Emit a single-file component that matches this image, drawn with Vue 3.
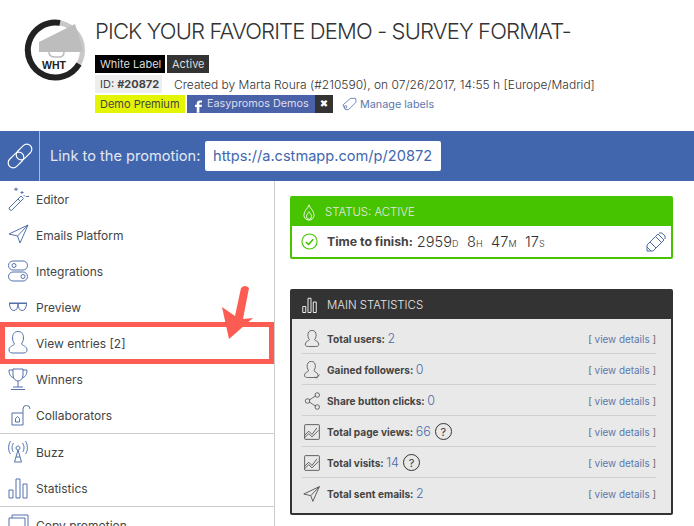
<script setup>
const nav = [
  [
    { label: 'Editor', d: 'M1 21 L13 9 L15.500 11.500 L3.500 23.500 Q1.500 23.500 1 21 Z M10 12 L12.500 14.500 M8 4 V0.500 M6 2.200 H10 M14 4 V7 M12.500 5.500 H15.500 M18 9.500 h3 M15.500 8 l1.500 1.500' },
    { label: 'Emails Platform', d: 'M1 11 L20 2 L12 20 L9.500 13 Z M9.500 13 L20 2' },
    { label: 'Integrations', d: 'M5 2 H15 A4.500 4.500 0 0 1 15 11 H5 A4.500 4.500 0 0 1 5 2 Z M5 13 H15 A4.500 4.500 0 0 1 15 22 H5 A4.500 4.500 0 0 1 5 13 Z M8 6.500 A2 2 0 1 1 4 6.500 A2 2 0 1 1 8 6.500 Z M17 17.500 A2 2 0 1 1 13 17.500 A2 2 0 1 1 17 17.500 Z' },
    { label: 'Preview', d: 'M1 8 H19 M1 8.500 H19 M1.500 9 Q2 15.500 6 15.500 Q9.500 15.500 10 9 M10 9 Q10.500 15.500 14 15.500 Q18 15.500 18.500 9' },
    { label: 'View entries [2]', d: 'M10 0.500 C6 0.500 4.500 3.500 4.500 7 C4.500 10 6 12 6.500 13 C6 14.500 1 15 1 19 C1 21.500 3 22 5 22 H15 C17 22 19 21.500 19 19 C19 15 14 14.500 13.500 13 C14 12 15.500 10 15.500 7 C15.500 3.500 14 0.500 10 0.500 Z' },
    { label: 'Winners', d: 'M5 2 H15 V8 C15 12 12 14 10 14 C8 14 5 12 5 8 Z M5 3 H1 C1 8 3 10 6 11 M15 3 H19 C19 8 17 10 14 11 M10 14 V20 M5 20 H15 M3 22.500 H17' },
    { label: 'Collaborators', d: 'M4 10 H15 V22 H4 Z M15 10 V6 A3.500 3.500 0 0 1 22 6 M9.500 13.500 L11.500 15.500 V19 H7.500 V15.500 Z' },
  ],
  [
    { label: 'Buzz', d: 'M12 8 A2 2 0 1 1 12 7.990 Z M10 10 L6.500 22 H13.500 L10 10 M8 17 H12 M5.500 3 C3.500 6 3.500 10 5.500 12 M14.500 3 C16.500 6 16.500 10 14.500 12 M2.500 1 C0 5 0 11 2.500 14 M17.500 1 C20 5 20 11 17.500 14' },
    { label: 'Statistics', d: 'M1 14 H5 V22 H1 Z M8 3 H12 V22 H8 Z M15 8 H19 V22 H15 Z' },
  ],
  [
    { label: 'Copy promotion', d: 'M1 5 H17 V22 H1 Z M4 5 V2 H20 V18 H17' },
  ],
]

const iconUser = nav[0][4].d
const iconChart = 'M3 2 H19 Q20 2 20 3 V19 Q20 20 19 20 H3 Q2 20 2 19 V3 Q2 2 3 2 Z M2 15 L7 10 L11 14 L17 6 M2 18 L7 13 L11 17 L19 9'
const iconSend = nav[0][1].d

const stats = [
  { label: 'Total users:', value: '2', d: iconUser, box: '0 0 20 24' },
  { label: 'Gained followers:', value: '0', d: iconUser + ' M15 21 L17 23 L21 18', box: '0 0 22 24' },
  { label: 'Share button clicks:', value: '0', d: 'M7 11 L16 5 M7 13 L16 19 M8 12 A3 3 0 1 1 2 12 A3 3 0 1 1 8 12 Z M21 4 A3 3 0 1 1 15 4 A3 3 0 1 1 21 4 Z M21 20 A3 3 0 1 1 15 20 A3 3 0 1 1 21 20 Z', box: '0 0 22 24' },
  { label: 'Total page views:', value: '66', d: iconChart, box: '0 0 22 22', help: true },
  { label: 'Total visits:', value: '14', d: iconChart, box: '0 0 22 22', help: true },
  { label: 'Total sent emails:', value: '2', d: iconSend, box: '0 0 22 22' },
]

const countdown = [
  ['2959', 'D'],
  ['8', 'H'],
  ['47', 'M'],
  ['17', 'S'],
]
</script>

<template>
  <div class="page">
    <header class="head">
      <svg class="logo" viewBox="0 0 62 62" width="62" height="62">
        <circle cx="31" cy="31" r="27.500" fill="none" stroke="#c8c8c8" stroke-width="5" />
        <path d="M36 3.900 A27.500 27.500 0 1 0 55 45" fill="none" stroke="#222" stroke-width="6" />
        <path d="M15 23 L51 5 L59 31 L56 33 L15 33 Z" fill="#bdbdbd" />
        <path d="M25 33 Q25 38 31 38 H35 Q40 38 40 33" fill="none" stroke="#bdbdbd" stroke-width="1.500" />
        <text x="30" y="50" text-anchor="middle" class="logo-text">WHT</text>
      </svg>
      <div class="head-body">
        <h1>PICK YOUR FAVORITE DEMO - SURVEY FORMAT-</h1>
        <div class="tags">
          <span class="tag black">White Label</span>
          <span class="tag dark">Active</span>
        </div>
        <div class="tags meta">
          <span class="tag grey">ID: <b>#20872</b></span>
          <span class="created">Created by Marta Roura (#210590), on 07/26/2017, 14:55 h [Europe/Madrid]</span>
        </div>
        <div class="tags">
          <span class="tag yellow">Demo Premium</span>
          <span class="tag fb">
            <svg class="f" viewBox="0 0 8 14" width="7" height="13" fill="#fff">
              <path d="M5 14 V7.500 H7.500 L8 5 H5 V3.500 Q5 2.500 6 2.500 H8 V0 H5.500 Q2 0 2 3.500 V5 H0 V7.500 H2 V14 Z" />
            </svg>
            Easypromos Demos
          </span>
          <span class="tag close">✖</span>
          <a class="manage">
            <svg viewBox="0 0 16 14" width="15" height="14" fill="none" stroke="#5a78ae" stroke-width="0.900">
              <path d="M1 8 L9 1 H14.500 L15 5 L7 13 H3.500 Z" />
              <circle cx="3.800" cy="10" r="1.300" />
            </svg>
            Manage labels
          </a>
        </div>
      </div>
    </header>

    <div class="linkbar">
      <div class="link-icon">
        <svg viewBox="0 0 26 26" width="26" height="26" fill="none" stroke="#fff" stroke-width="1.200">
          <rect x="8" y="4" width="18" height="10" rx="5" transform="rotate(-45 17 9)" />
          <rect x="0" y="12" width="18" height="10" rx="5" transform="rotate(-45 9 17)" />
        </svg>
      </div>
      <span class="link-label">Link to the promotion:</span>
      <span class="link-url">https://a.cstmapp.com/p/20872</span>
    </div>

    <div class="main">
      <nav class="side">
        <div v-for="(group, g) in nav" :key="g" class="group">
          <div v-for="item in group" :key="item.label" class="item">
            <span class="item-icon">
              <svg viewBox="0 0 24 24" width="24" height="24" fill="none" stroke="#4a6aa8" stroke-width="0.950">
                <path :d="item.d" />
              </svg>
            </span>
            {{ item.label }}
          </div>
        </div>
        <div class="highlight"></div>
        <svg class="arrow" viewBox="0 0 34 56" width="34" height="56">
          <path d="M21 3 Q25 -1 29 3 L23 34 L33 33 L9 54 L2 22 L15 31 Z" fill="#fd5c52" />
        </svg>
      </nav>

      <section class="content">
        <div class="card status">
          <div class="card-head">
            <svg viewBox="0 0 16 20" width="14" height="17" fill="none" stroke="#fff" stroke-width="1">
              <path d="M8 1 C9 5 14 8 14 13 A6 6 0 0 1 2 13 C2 8 7 5 8 1 Z M8 9 C9 11 11 12 11 15 A3 3 0 0 1 5 15 C5 12 7 11 8 9 Z" />
            </svg>
            STATUS: ACTIVE
          </div>
          <div class="status-body">
            <svg viewBox="0 0 18 18" width="17" height="17" fill="none" stroke="#46c400" stroke-width="1.200">
              <circle cx="9" cy="9" r="8" />
              <path d="M5 9.500 L8 12 L13 6.500" stroke-width="1.600" />
            </svg>
            <b class="finish">Time to finish:</b>
            <span class="count">
              <span v-for="c in countdown" :key="c[1]" class="count-part">{{ c[0] }}<small>{{ c[1] }}</small></span>
            </span>
            <svg class="pencil" viewBox="0 0 20 20" width="20" height="20" fill="none" stroke="#4a6aa8" stroke-width="1">
              <path d="M1 13 L12 2 L18 8 L7 19 H1 Z M9.500 4.500 L15.500 10.500 M4 10 L10 16 M1 15 L5 19 M13 1 L16 1 L19 4 L19 7" />
            </svg>
          </div>
        </div>

        <div class="card stats">
          <div class="card-head">
            <svg viewBox="0 0 20 24" width="15" height="18" fill="none" stroke="#fff" stroke-width="1.200">
              <path :d="nav[1][1].d" />
            </svg>
            MAIN STATISTICS
          </div>
          <div class="stats-body">
            <div v-for="s in stats" :key="s.label" class="stat">
              <span class="stat-icon">
                <svg :viewBox="s.box" width="18" height="18" fill="none" stroke="#444" stroke-width="1">
                  <path :d="s.d" />
                </svg>
              </span>
              <b>{{ s.label }}</b>
              <span class="val">{{ s.value }}</span>
              <span v-if="s.help" class="help">?</span>
              <span class="details">[ <a>view details</a> ]</span>
            </div>
          </div>
        </div>
      </section>
    </div>
  </div>
</template>

<style>
html, body { margin: 0; background: #fff; overflow: hidden; }
</style>

<style scoped>
.page {
  width: 694px;
  height: 526px;
  overflow: hidden;
  font-family: Inter, "Liberation Sans", sans-serif;
  color: #444;
}
.head {
  height: 131px;
  box-sizing: border-box;
  padding: 16px 0 0 24px;
  display: flex;
  align-items: flex-start;
}
.logo { flex: none; margin-top: 3px; }
.logo-text { font: bold 10.500px "Liberation Sans", sans-serif; fill: #222; }
.head-body { margin-left: 9px; }
h1 {
  margin: 0 0 9px;
  font-size: 22px;
  font-weight: 300;
  letter-spacing: -0.85px;
  line-height: 30px;
  color: #333;
  white-space: nowrap;
}
.tags { display: flex; align-items: center; gap: 2px; height: 18px; margin-bottom: 2px; }
.tag {
  height: 18px;
  line-height: 18px;
  padding: 0 5px;
  font-size: 11px;
  white-space: nowrap;
  box-sizing: border-box;
}
.black { background: #000; color: #ddd; width: 70px; }
.dark { background: #333; color: #ddd; width: 42px; }
.grey { background: #eee; color: #444; width: 67px; }
.created { font-size: 12px; font-weight: 300; margin-left: 10px; color: #333; white-space: nowrap; }
.yellow { background: #e4f500; color: #444; width: 90px; }
.fb { background: #4a62a8; color: #dde; display: flex; width: 128px; font-size: 10.800px; }
.f { flex: none; margin: 5px 5px 0 3px; }
.close {
  background: #333;
  color: #fff;
  margin-left: -2px;
  width: 18px;
  padding: 0;
  text-align: center;
  font-family: "DejaVu Sans", sans-serif;
  font-size: 10px;
}
.manage {
  margin-left: 7px;
  display: flex;
  align-items: center;
  gap: 3px;
  font-size: 10.800px;
  color: #5a78ae;
  white-space: nowrap;
}
.linkbar {
  height: 50px;
  background: #4166ae;
  display: flex;
  align-items: center;
  color: #e4e9f3;
}
.link-icon {
  width: 40px;
  height: 50px;
  border-right: 1px solid #a9bcdc;
  box-sizing: border-box;
  display: flex;
  align-items: center;
  justify-content: center;
}
.link-label { font-size: 14.600px; margin-left: 10px; width: 155px; white-space: nowrap; }
.link-url {
  background: #fff;
  color: #4166ae;
  width: 236px;
  height: 30px;
  line-height: 30px;
  border-radius: 2px;
  box-sizing: border-box;
  padding-left: 8px;
  font-size: 14.600px;
  white-space: nowrap;
}
.main { display: flex; }
.side {
  position: relative;
  width: 275px;
  height: 345px;
  box-sizing: border-box;
  border-right: 1px solid #ccc;
  flex: none;
}
.group { border-bottom: 1px solid #ccc; }
.item {
  height: 36px;
  display: flex;
  align-items: center;
  font-size: 12px;
  color: #444;
  white-space: nowrap;
}
.item-icon { width: 36px; padding-left: 8px; box-sizing: border-box; display: flex; flex: none; }
.highlight {
  position: absolute;
  left: 0;
  top: 141px;
  width: 274px;
  height: 42px;
  box-sizing: border-box;
  border: 5px solid #fd5c52;
}
.arrow { position: absolute; left: 220px; top: 104px; }
.content { flex: 1; padding: 15px 21px 0 15px; min-width: 0; }
.card { border-radius: 2px; overflow: hidden; box-sizing: border-box; }
.card-head {
  height: 30px;
  box-sizing: border-box;
  padding-top: 2px;
  display: flex;
  align-items: center;
  gap: 9px;
  padding-left: 10px;
  color: #e8e8e8;
  font-size: 11.400px;
  font-weight: 300;
}
.stats .card-head { gap: 10px; }
.status { background: #46c400; padding: 0 2px 2px; height: 63px; margin-bottom: 30px; }
.status-body {
  background: #fff;
  height: 31px;
  display: flex;
  align-items: center;
  padding: 0 5px 0 9px;
}
.finish { font-size: 12.300px; font-weight: 700; margin-left: 9px; margin-right: 4px; white-space: nowrap; }
.count { display: flex; gap: 8.500px; font-size: 14.600px; font-weight: 300; color: #333; white-space: nowrap; }
.count small { font-size: 9px; }
.pencil { margin-left: auto; }
.stats { background: #333; padding: 0 2px 2px 2px; height: 226px; }
.stats-body { background: #e9e9e9; height: 194px; padding: 4px 15px 0 10px; box-sizing: border-box; }
.stat {
  height: 31px;
  padding-top: 1px;
  display: flex;
  align-items: center;
  border-bottom: 1px solid #cfcfcf;
  box-sizing: border-box;
  font-size: 10.100px;
  white-space: nowrap;
}
.stat:last-child { border-bottom: 0; padding-top: 0; }
.stat-icon { width: 25px; flex: none; display: flex; padding-left: 1px; box-sizing: border-box; }
.stat b { font-weight: 700; color: #444; }
.val { font-size: 12.500px; color: #4a6aa8; font-weight: 300; margin-left: 2.500px; }
.help {
  width: 17px;
  height: 17px;
  box-sizing: border-box;
  border: 1px solid #333;
  border-radius: 50%;
  margin-left: 4px;
  display: flex;
  align-items: center;
  justify-content: center;
  font-size: 11px;
  color: #333;
}
.details { margin-left: auto; color: #666; font-size: 9.900px; }
.details a { color: #5a78ae; }
</style>
